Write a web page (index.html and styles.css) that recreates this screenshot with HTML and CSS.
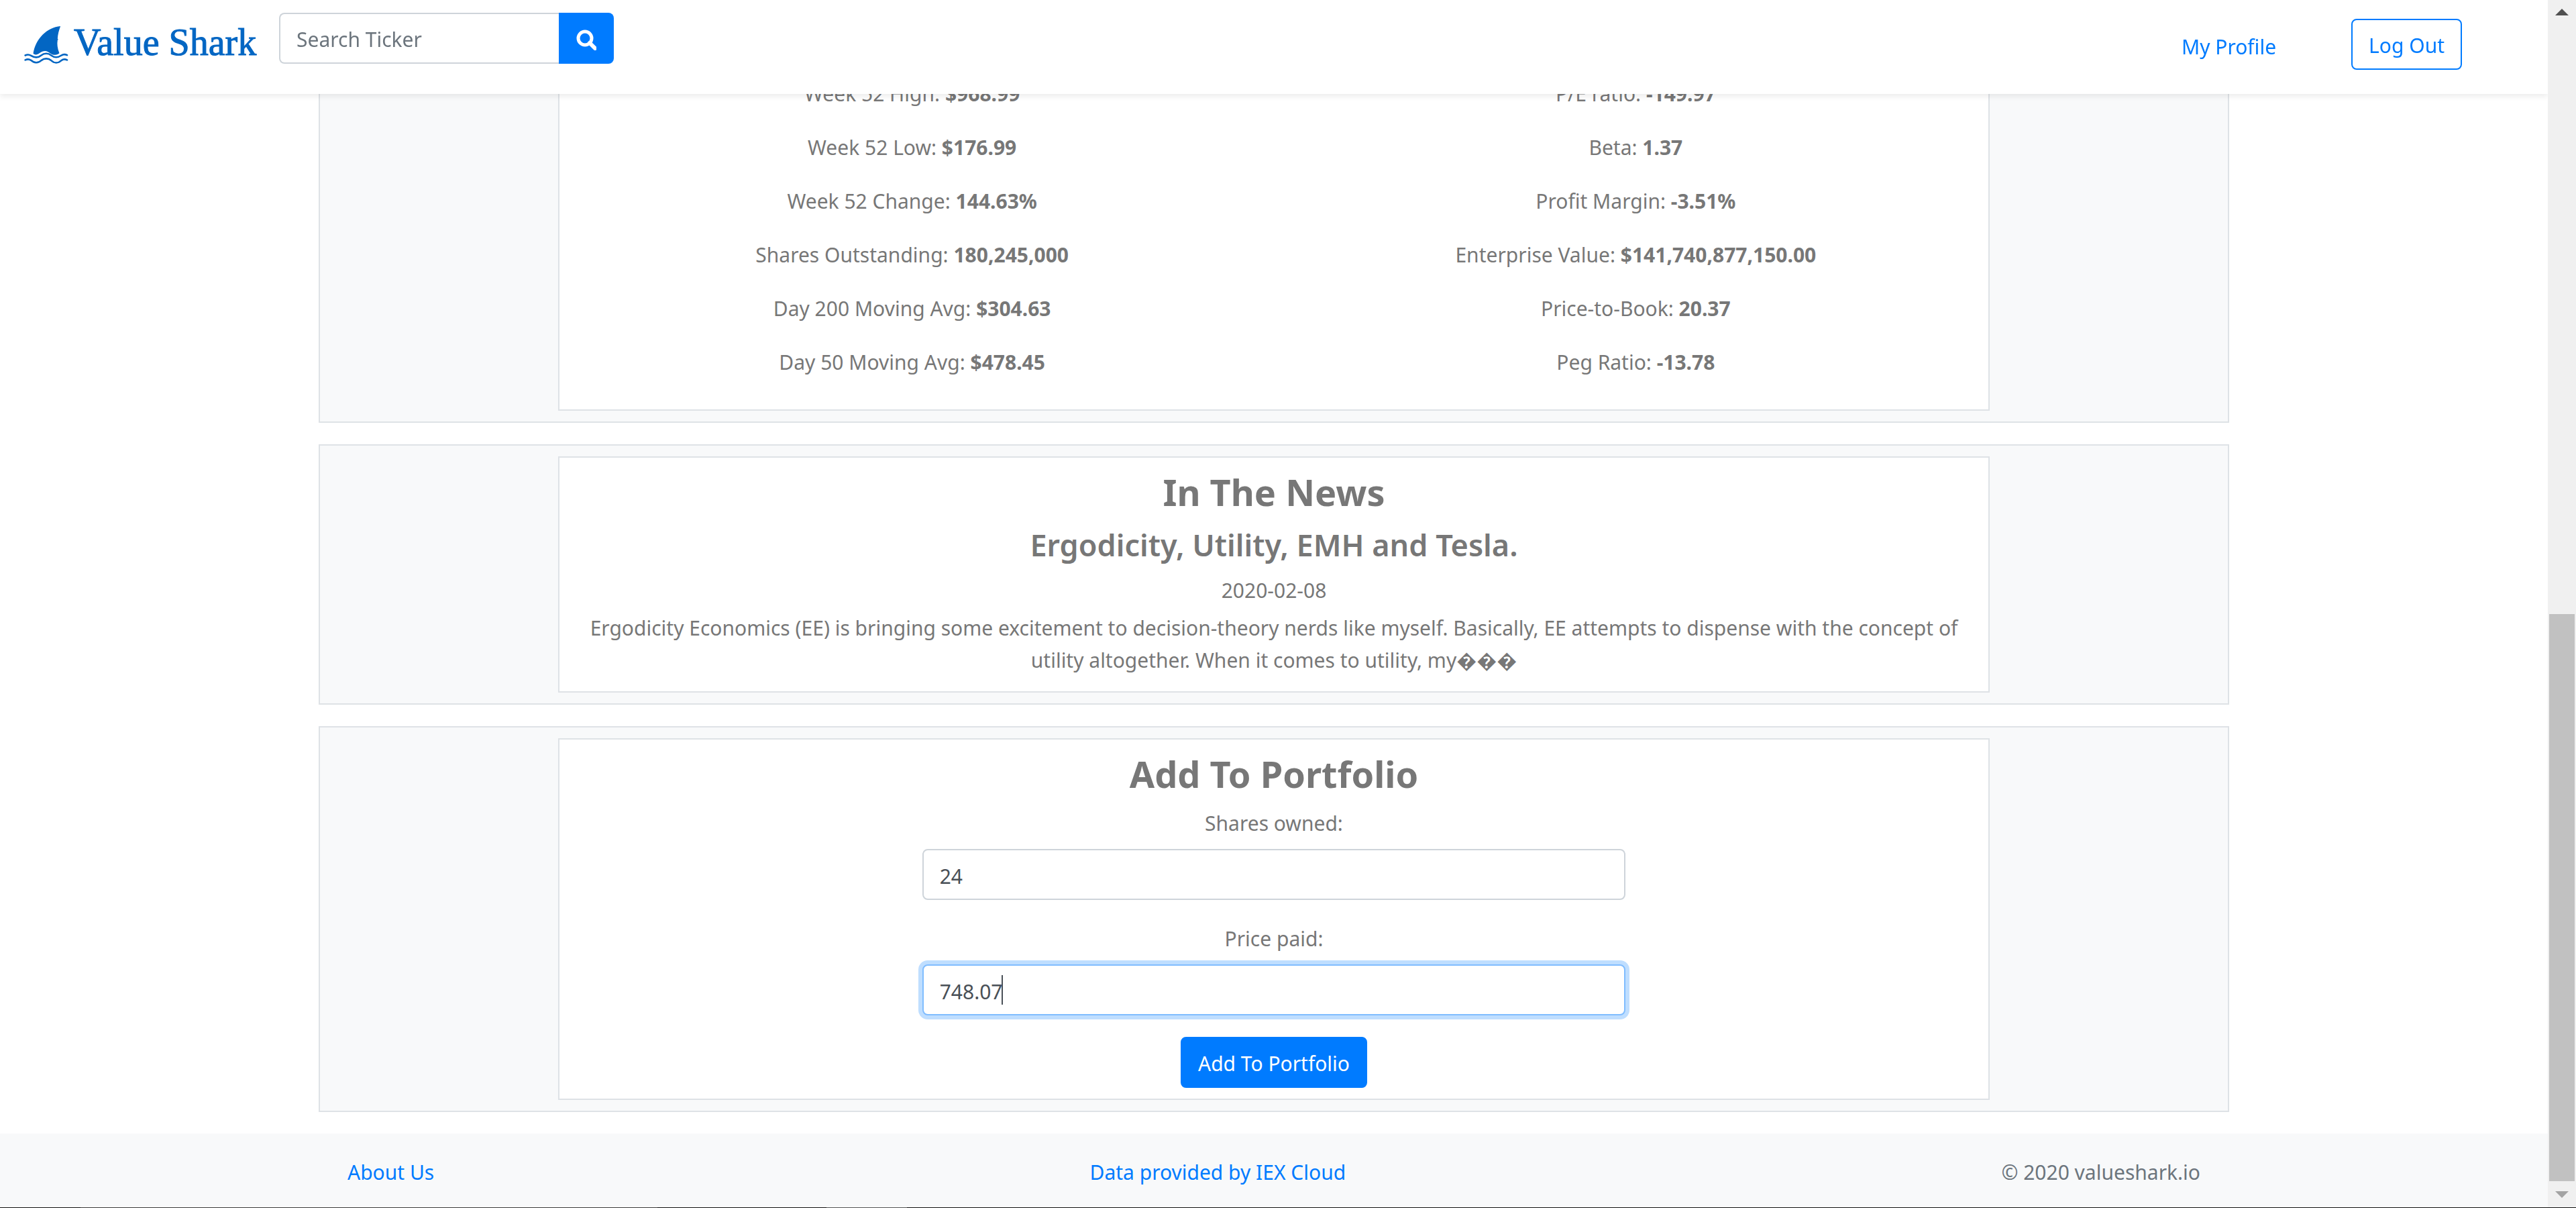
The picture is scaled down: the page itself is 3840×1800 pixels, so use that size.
FILE: index.html
```html
<!DOCTYPE html>
<html lang="en">
<head>
<meta charset="utf-8">
<title>Value Shark</title>
<link rel="stylesheet" href="styles.css">
</head>
<body>
<header class="navbar">
  <a class="brand" href="#">
    <svg class="brand-icon" viewBox="48 52 200 174" aria-hidden="true">
      <path fill="#0366c3" d="M212 54C152 58 98 112 89 178c10 9 20 3 29-3 12-8 25-12 36-6 12 6 20 16 34 15 8-1 14-3 19-8-9-22-11-42-8-59l3-3-3-3c1-20 6-38 13-57z"/>
      <g fill="none" stroke="#0366c3" stroke-width="8" stroke-linecap="round">
        <path d="M53 186c10-5 18-4 26 1 14 9 32 11 46-1 14-11 32-11 45 0 14 11 32 10 46 0 8-5 16-6 26-1"/>
        <path d="M53 207c10-5 18-4 26 1 14 13 32 14 46 1 14-11 32-11 45 0 14 13 32 13 46 0 8-6 16-7 26-2"/>
      </g>
    </svg>
    <span>Value Shark</span>
  </a>
  <form class="search">
    <input class="search-input" type="text" placeholder="Search Ticker" aria-label="Search Ticker">
    <button class="search-button" type="button" aria-label="Search">
      <svg class="search-icon" viewBox="0 0 30 31" fill="none" stroke="#fff" aria-hidden="true"><circle cx="13" cy="13" r="10" stroke-width="5"/><path d="M20 20l8 8" stroke-width="6" stroke-linecap="round"/></svg>
    </button>
  </form>
  <nav class="nav-links">
    <a class="link" href="#">My Profile</a>
    <button class="button button-outline" type="button">Log Out</button>
  </nav>
</header>

<div class="page">
  <main class="content">
    <section class="panel">
      <div class="panel-body stats">
        <div class="stats-column">
          <p>Week 52 High: <b>$968.99</b></p>
          <p>Week 52 Low: <b>$176.99</b></p>
          <p>Week 52 Change: <b>144.63%</b></p>
          <p>Shares Outstanding: <b>180,245,000</b></p>
          <p>Day 200 Moving Avg: <b>$304.63</b></p>
          <p>Day 50 Moving Avg: <b>$478.45</b></p>
        </div>
        <div class="stats-column">
          <p>P/E ratio: <b>-149.97</b></p>
          <p>Beta: <b>1.37</b></p>
          <p>Profit Margin: <b>-3.51%</b></p>
          <p>Enterprise Value: <b>$141,740,877,150.00</b></p>
          <p>Price-to-Book: <b>20.37</b></p>
          <p>Peg Ratio: <b>-13.78</b></p>
        </div>
      </div>
    </section>

    <section class="panel">
      <article class="panel-body">
        <h2 class="title">In The News</h2>
        <h3 class="headline">Ergodicity, Utility, EMH and Tesla.</h3>
        <p class="news-text">2020-02-08</p>
        <p class="news-text">Ergodicity Economics (EE) is bringing some excitement to decision-theory nerds like myself. Basically, EE attempts to dispense with the concept of utility altogether. When it comes to utility, my���</p>
      </article>
    </section>

    <section class="panel">
      <form class="panel-body portfolio">
        <h2 class="title">Add To Portfolio</h2>
        <label class="field">Shares owned:
          <input class="field-input" type="text" value="24">
        </label>
        <label class="field">Price paid:
          <span class="field-box">
            <input class="field-input focused" type="text" value="748.07">
            <span class="caret"></span>
          </span>
        </label>
        <button class="button button-primary" type="button">Add To Portfolio</button>
      </form>
    </section>
  </main>

  <footer class="footer">
    <a class="link" href="#">About Us</a>
    <a class="link" href="#">Data provided by IEX Cloud</a>
    <span>© 2020 valueshark.io</span>
  </footer>
</div>

<div class="scrollbar" aria-hidden="true">
  <svg class="scroll-arrow" viewBox="0 0 20 10"><path fill="#505050" d="M10 0l10 10H0z"/></svg>
  <div class="scroll-track"><div class="scroll-thumb"></div></div>
  <svg class="scroll-arrow" viewBox="0 0 20 10"><path fill="#a3a3a3" d="M0 0h20L10 10z"/></svg>
</div>
<div class="window-edge" aria-hidden="true"></div>
</body>
</html>
```
FILE: styles.css
```css
* { box-sizing: border-box; }

body {
  margin: 0;
  background: #fff;
  color: #777;
  font: 30px/48px "Noto Sans", "Open Sans", sans-serif;
}

p, h2, h3 { margin: 0; }
input, button { font: inherit; }

.link { color: #007bff; text-decoration: none; }

/* Top bar */
.navbar {
  position: fixed;
  top: 0;
  left: 0;
  right: 42px;
  z-index: 2;
  display: flex;
  align-items: flex-start;
  height: 140px;
  padding: 19px 128px 0 36px;
  background: #fff;
  box-shadow: 0 4px 8px rgba(0, 0, 0, .075);
}
.brand {
  display: flex;
  align-items: flex-start;
  gap: 8px;
  width: 380px;
  padding-top: 8px;
  color: #0366c3;
  font: 56px/72px "Liberation Serif", serif;
  -webkit-text-stroke: 1px #0366c3;
  text-decoration: none;
  white-space: nowrap;
}
.brand-icon { width: 66px; height: 58px; margin-top: 11px; }
.search { display: flex; width: 499px; height: 76px; }
.search-input {
  flex: 1;
  min-width: 0;
  padding: 4px 24px 0;
  border: 2px solid #ced4da;
  border-right: 0;
  border-radius: 8px 0 0 8px;
}
.search-input::placeholder { color: #6c757d; opacity: 1; }
.search-button {
  width: 82px;
  padding: 4px 0 0;
  border: 0;
  border-radius: 0 8px 8px 0;
  background: #007bff;
}
.search-icon { display: block; width: 30px; height: 31px; margin: auto; }
.nav-links {
  display: flex;
  align-items: center;
  gap: 112px;
  margin: 9px 0 0 auto;
}
.nav-links .link { padding-top: 8px; }

.button {
  height: 76px;
  padding: 4px 24px 0;
  border: 2px solid #007bff;
  border-radius: 8px;
}
.button-outline { background: #fff; color: #007bff; }
.button-primary { background: #007bff; color: #fff; }

/* Panels */
.page { padding-right: 42px; }
.content {
  display: flex;
  flex-direction: column;
  align-items: center;
  gap: 32px;
  padding: 78px 0 32px;
}
.panel {
  width: 75%;
  padding: 16px 0;
  border: 2px solid #dee2e6;
  background: #f8f9fa;
}
.panel-body {
  width: 75%;
  margin: 0 auto;
  padding: 16px;
  border: 2px solid #dee2e6;
  background: #fff;
  text-align: center;
}
.stats { display: flex; gap: 28px; padding: 16px 0; }
.stats-column { flex: 1; }
.stats-column p { padding: 2px 0 30px; }
.title { padding: 2px 0 14px; font-size: 54px; line-height: 67px; font-weight: 700; }
.headline { padding: 2px 0 14px; font-size: 45px; line-height: 57px; font-weight: 600; }
.news-text { padding: 2px 0 6px; }

.portfolio { display: flex; flex-direction: column; align-items: center; }
.field {
  display: flex;
  flex-direction: column;
  gap: 14px;
  width: 50%;
  padding: 2px 0 32px;
}
.field-box { position: relative; display: flex; }
.field-input {
  width: 100%;
  height: 76px;
  padding: 4px 24px 0;
  border: 2px solid #ced4da;
  border-radius: 8px;
  background: #fff;
  color: #495057;
}
.focused { border-color: #80bdff; box-shadow: 0 0 0 6px #bfdeff; }
.caret {
  position: absolute;
  top: 16px;
  left: 118px;
  width: 2px;
  height: 44px;
  background: #495057;
}

.footer {
  display: flex;
  justify-content: space-between;
  padding: 34px 518px 29px;
  background: #f8f9fa;
  color: #6c757d;
}

/* Window chrome */
.scrollbar {
  position: fixed;
  top: 0;
  right: 0;
  bottom: 0;
  z-index: 2;
  display: flex;
  flex-direction: column;
  align-items: center;
  justify-content: space-between;
  width: 42px;
  padding: 13px 2px 15px;
  background: #f0f0f0;
}
.scroll-arrow { width: 20px; height: 10px; }
.scroll-track {
  display: flex;
  flex: 1;
  flex-direction: column;
  justify-content: flex-end;
  width: 100%;
  padding: 12px 0 15px;
}
.scroll-thumb { height: 49%; background: #c1c1c1; }
.window-edge {
  position: fixed;
  left: 0;
  right: 0;
  bottom: 0;
  z-index: 3;
  height: 1px;
  background: linear-gradient(90deg, #111 120px, #3a3a3a 120px 980px, #111 980px 1232px, #555 1232px 1352px, #111 1352px);
}
```
